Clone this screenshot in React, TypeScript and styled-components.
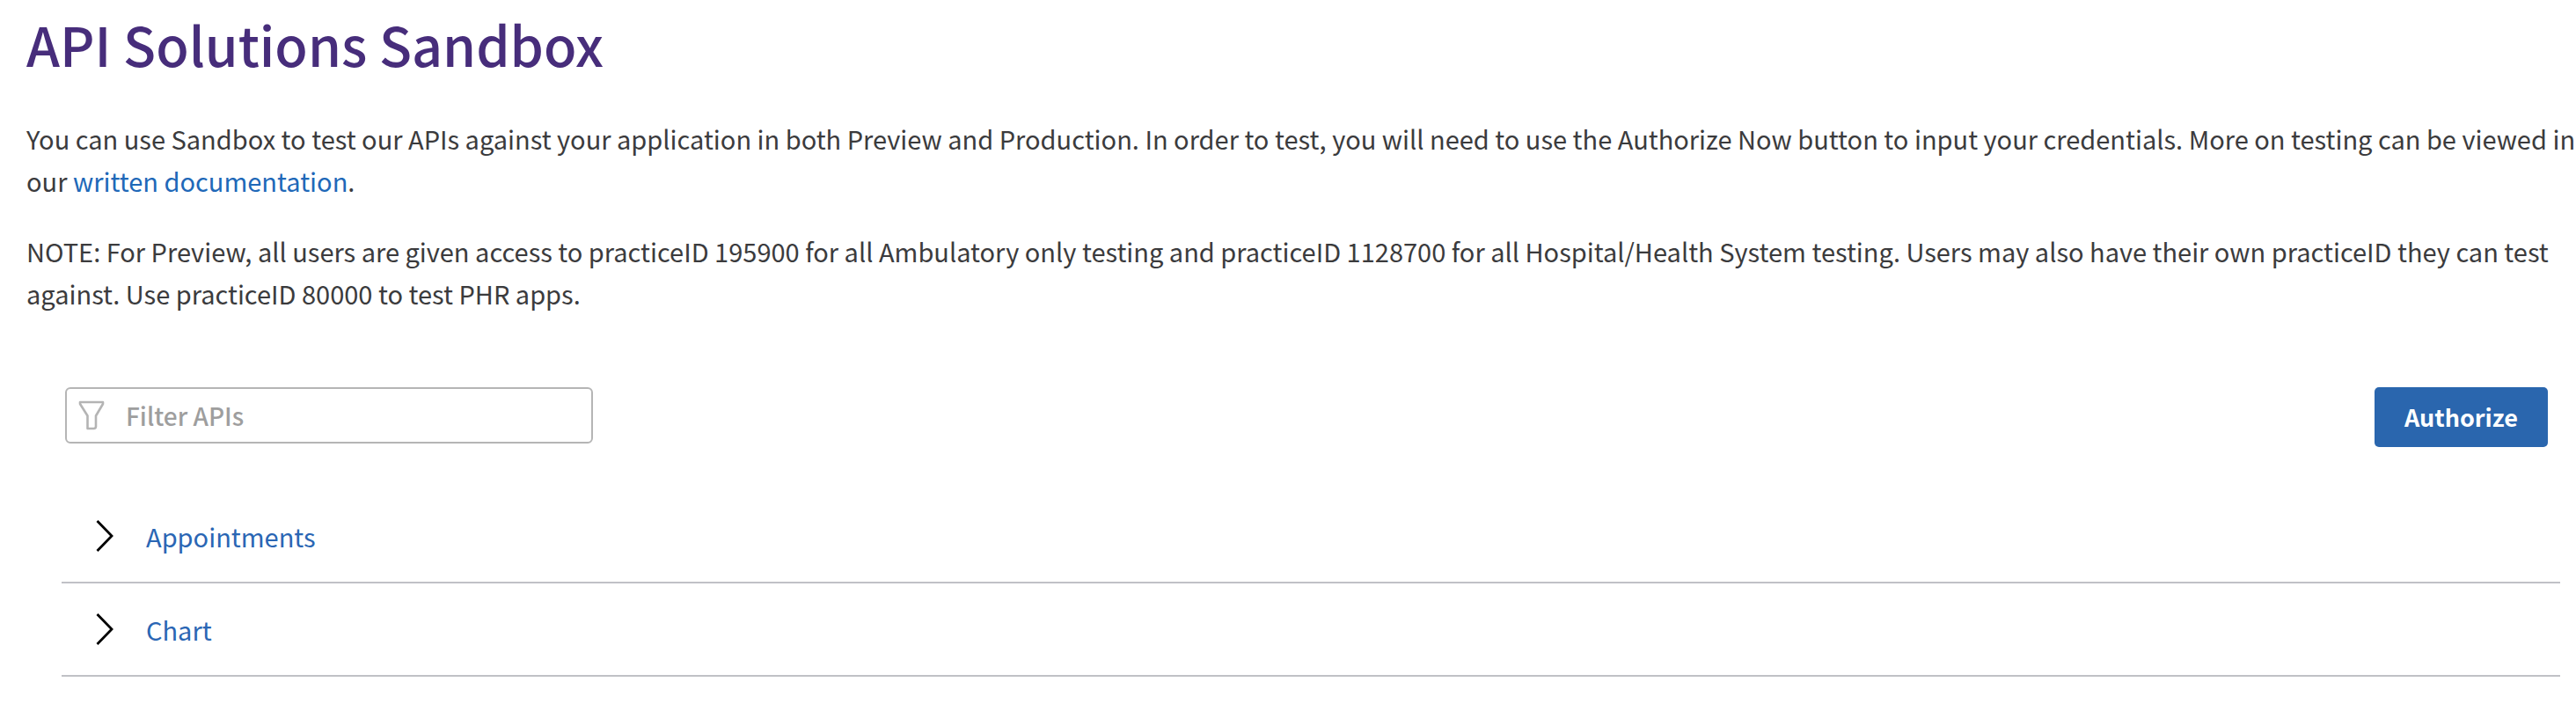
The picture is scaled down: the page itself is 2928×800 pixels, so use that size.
import React, { useState } from "react";
import styled, { createGlobalStyle } from "styled-components";

const GlobalStyle = createGlobalStyle`
  *, *::before, *::after { box-sizing: border-box; }
  body {
    margin: 0;
    background: #fff;
    color: #3b3b3d;
    font-family: "Noto Sans CJK SC", "Noto Sans", sans-serif;
    font-size: 29px;
    line-height: 48px;
  }
`;

const Page = styled.main`
  padding: 6px 0 24px 30px;
`;

const Title = styled.h1`
  margin: 0 0 39px;
  color: #472d7b;
  font-size: 61px;
  font-weight: 500;
  line-height: 88px;
`;

const Paragraph = styled.p`
  margin: 0 0 32px;
`;

const DocLink = styled.a`
  color: #2068b8;
  text-decoration: none;
`;

const Explorer = styled.section`
  padding: 51px 18px 0 40px;
`;

const Toolbar = styled.div`
  display: flex;
  align-items: flex-start;
  justify-content: space-between;
  padding: 0 14px 0 4px;
  margin-bottom: 49px;
`;

const FilterField = styled.label`
  display: flex;
  align-items: center;
  gap: 24px;
  width: 600px;
  height: 64px;
  padding: 0 13px;
  border: 2px solid #b5b5b5;
  border-radius: 6px;
  background: #fff;
`;

const FilterInput = styled.input`
  flex: 1;
  min-width: 0;
  padding: 0;
  border: 0;
  outline: 0;
  background: transparent;
  color: #3b3b3d;
  font: inherit;
  font-size: 28px;
  font-weight: 500;
  &::placeholder {
    color: #9e9e9e;
    opacity: 1;
  }
`;

const AuthorizeButton = styled.button`
  height: 68px;
  padding: 0 34px;
  border: 0;
  border-radius: 5px;
  background: #2a66ae;
  color: #fff;
  font: inherit;
  font-size: 27px;
  font-weight: 700;
`;

const GroupList = styled.ul`
  margin: 0;
  padding: 0;
  list-style: none;
`;

const GroupItem = styled.li`
  border-bottom: 2px solid #c0c1c6;
`;

const GroupButton = styled.button`
  display: flex;
  align-items: center;
  gap: 37px;
  width: 100%;
  height: 104px;
  padding: 0 39px;
  border: 0;
  background: transparent;
  color: #2a66b4;
  font: inherit;
  text-align: left;
`;

const FunnelIcon = () => (
  <svg width="30" height="34" viewBox="0 0 30 34" fill="none" stroke="#b4b4b4" strokeWidth="2.6" strokeLinejoin="round" aria-hidden="true">
    <path d="M2 2H28V4L20 17.500V29.500Q20 32 17.500 32H10.500V17.500L2 4Z" />
  </svg>
);

const ChevronIcon = () => (
  <svg width="20" height="38" viewBox="0 0 20 38" fill="none" stroke="#000" strokeWidth="2.800" aria-hidden="true">
    <path d="M1.500 2L18 19L1.500 36" />
  </svg>
);

const groups = ["Appointments", "Chart"];

export default function App() {
  const [query, setQuery] = useState("");
  const shown = groups.filter((g) => g.toLowerCase().includes(query.toLowerCase()));

  return (
    <Page>
      <GlobalStyle />
      <Title>API Solutions Sandbox</Title>
      <Paragraph>
        You can use Sandbox to test our APIs against your application in both Preview and Production. In order to
        test, you will need to use the Authorize Now button to input your credentials. More on testing can be viewed
        in our <DocLink href="#documentation">written documentation</DocLink>.
      </Paragraph>
      <Paragraph>
        NOTE: For Preview, all users are given access to practiceID 195900 for all Ambulatory only testing and
        practiceID 1128700 for all Hospital/Health System testing. Users may also have their own practiceID they can
        test against. Use practiceID 80000 to test PHR apps.
      </Paragraph>
      <Explorer>
        <Toolbar>
          <FilterField>
            <FunnelIcon />
            <FilterInput
              type="text"
              aria-label="Filter APIs"
              placeholder="Filter APIs"
              value={query}
              onChange={(e) => setQuery(e.target.value)}
            />
          </FilterField>
          <AuthorizeButton type="button">Authorize</AuthorizeButton>
        </Toolbar>
        <GroupList>
          {shown.map((name) => (
            <GroupItem key={name}>
              <GroupButton type="button" aria-expanded={false}>
                <ChevronIcon />
                {name}
              </GroupButton>
            </GroupItem>
          ))}
        </GroupList>
      </Explorer>
    </Page>
  );
}
